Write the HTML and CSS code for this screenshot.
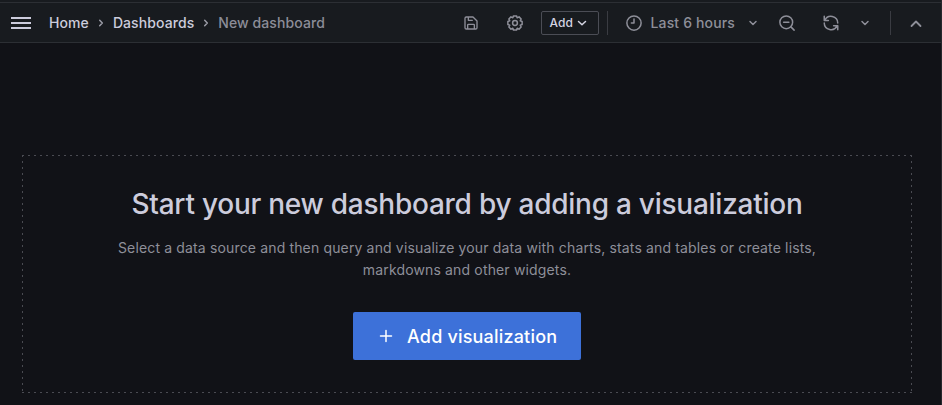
FILE: index.html
```html
<!DOCTYPE html>
<html lang="en">
<head>
<meta charset="utf-8">
<title>New dashboard</title>
<link rel="stylesheet" href="styles.css">
</head>
<body>
<header class="toolbar">
  <button class="menu" aria-label="Menu"><span></span><span></span><span></span></button>
  <nav class="crumbs">
    <a>Home</a>
    <svg class="sep" viewBox="0 0 16 16"><path d="M6.700 5.200 9.300 8l-2.600 2.800"/></svg>
    <a>Dashboards</a>
    <svg class="sep" viewBox="0 0 16 16"><path d="M6.700 5.200 9.300 8l-2.600 2.800"/></svg>
    <span class="current">New dashboard</span>
  </nav>
  <div class="actions">
    <svg class="icon save" viewBox="0 0 24 24"><path d="M3 5a2 2 0 0 1 2-2h10L21 9v10a2 2 0 0 1-2 2H5a2 2 0 0 1-2-2zM8 3v5h6M7 21v-6a1 1 0 0 1 1-1h8a1 1 0 0 1 1 1v6"/></svg>
    <svg class="icon gear" viewBox="0 0 24 24"><path d="M10 2.500h4l.9 2.500 2.500-1.200 2.800 2.800L19 9.100l2.500.9v4l-2.500.9 1.200 2.500-2.800 2.800-2.500-1.200-.9 2.500h-4L9.100 19l-2.500 1.200-2.800-2.800L5 14.900 2.500 14v-4L5 9.100 3.800 6.600l2.800-2.800L9.100 5z"/><circle cx="12" cy="12" r="3.200"/></svg>
    <button class="add">Add<svg class="chev" viewBox="0 0 16 16"><path d="m4.500 6.500 3.500 3.300 3.500-3.300"/></svg></button>
    <i class="divider"></i>
    <svg class="icon clock" viewBox="0 0 24 24"><circle cx="12" cy="12" r="9.500"/><path d="M12 6.500V12H8.500"/></svg>
    <span class="range">Last 6 hours</span>
    <svg class="chev range-chev" viewBox="0 0 16 16"><path d="m5 6.500 3 3 3-3"/></svg>
    <svg class="icon zoom" viewBox="0 0 24 24"><circle cx="11" cy="11" r="8.500"/><path d="M7.500 11h7M17.200 17.200 21.500 21.500"/></svg>
    <svg class="icon refresh" viewBox="0 0 24 24"><path d="M3 3v5.500h5.500M3.800 8.500A9 9 0 0 1 21 12M21 21v-5.500h-5.500M20.200 15.500A9 9 0 0 1 3 12"/></svg>
    <svg class="chev refresh-chev" viewBox="0 0 16 16"><path d="m5 6.500 3 3 3-3"/></svg>
    <i class="divider end"></i>
    <svg class="collapse" viewBox="0 0 16 16"><path d="m3.500 11 4.500-4.500 4.500 4.500"/></svg>
  </div>
</header>
<main class="canvas">
  <section class="empty">
    <h1>Start your new dashboard by adding a visualization</h1>
    <p>Select a data source and then query and visualize your data with charts, stats and tables or create lists, markdowns and other widgets.</p>
    <button class="primary"><svg viewBox="0 0 16 16"><path d="M8 2.500v11M2.500 8h11"/></svg><span>Add visualization</span></button>
  </section>
</main>
</body>
</html>
```
FILE: styles.css
```css
* { box-sizing: border-box; }
body {
  margin: 0;
  height: 405px;
  overflow: hidden;
  background: #111217;
  border-right: 1px solid #26282d;
  color: #ccccdc;
  font: 14px/22px Inter, "Liberation Sans", sans-serif;
  letter-spacing: 0.15px;
}
button { font: inherit; letter-spacing: inherit; color: inherit; background: none; border: 0; padding: 0; }
svg { display: block; flex: none; fill: none; stroke: currentColor; stroke-width: 1.500; stroke-linecap: round; stroke-linejoin: round; }
.toolbar {
  display: flex;
  align-items: center;
  height: 43px;
  padding: 4px 0 0 11px;
  background: #181b1f;
  border-bottom: 1px solid #2c2f34;
  box-shadow: inset 0 2px #181b1f, inset 0 3px #2c2f34;
}
.menu { display: flex; flex-direction: column; gap: 3px; width: 20px; }
.menu span { height: 2px; background: #ccccdc; }
.crumbs { display: flex; align-items: center; margin-left: 18px; font-weight: 500; letter-spacing: 0.085px; }
.sep { width: 16px; height: 16px; margin: 0 4px; color: #9a9ba5; }
.current { color: #8c8d98; }
.actions { display: flex; align-items: center; margin-left: auto; color: #8e8f99; }
.icon { width: 18px; height: 18px; stroke-width: 2; }
.save { width: 16px; height: 16px; }
.gear { margin-left: 27px; }
.chev { width: 16px; height: 16px; }
.add {
  display: flex;
  align-items: center;
  gap: 1px;
  width: 58px;
  height: 24px;
  margin-left: 17px;
  padding-left: 7px;
  border: 1px solid #4b4d55;
  border-radius: 2px;
  color: #d4d4e2;
  font-size: 12px;
  font-weight: 500;
}
.divider { width: 1px; height: 24px; margin-left: 8px; background: #3a3c42; }
.clock { margin-left: 17px; }
.range { margin-left: 7px; font-weight: 500; }
.range-chev { margin-left: 10px; }
.zoom { margin-left: 17px; }
.refresh { margin-left: 26px; }
.refresh-chev { margin-left: 17px; }
.end { margin-left: 17px; }
.collapse { width: 16px; height: 16px; margin: 0 17px 0; stroke-width: 1.800; }
.canvas { padding: 112px 29px 0 22px; }
.empty {
  --dash: #4a4b52;
  display: flex;
  flex-direction: column;
  align-items: center;
  height: 238px;
  padding-top: 33px;
  text-align: center;
  background:
    repeating-linear-gradient(90deg, var(--dash) 0 2px, transparent 2px 6px) 0 0 / 100% 1px no-repeat,
    repeating-linear-gradient(90deg, var(--dash) 0 2px, transparent 2px 6px) 0 100% / 100% 1px no-repeat,
    repeating-linear-gradient(var(--dash) 0 2px, transparent 2px 6px) 0 0 / 1px 100% no-repeat,
    repeating-linear-gradient(var(--dash) 0 2px, transparent 2px 6px) 100% 0 / 1px 100% no-repeat;
}
h1 { margin: 0; font-size: 28px; line-height: 32px; font-weight: 500; letter-spacing: -0.250px; }
p { width: 720px; margin: 17px 0 31px; color: #8e8f99; }
.primary {
  display: flex;
  align-items: center;
  width: 228px;
  height: 48px;
  padding: 1px 0 0 25px;
  border-radius: 2px;
  background: #3d71d9;
  color: #fff;
  font-size: 18px;
  font-weight: 500;
  letter-spacing: 0.190px;
}
.primary svg { width: 16px; height: 16px; margin: -1px 13px 0 0; }
```
